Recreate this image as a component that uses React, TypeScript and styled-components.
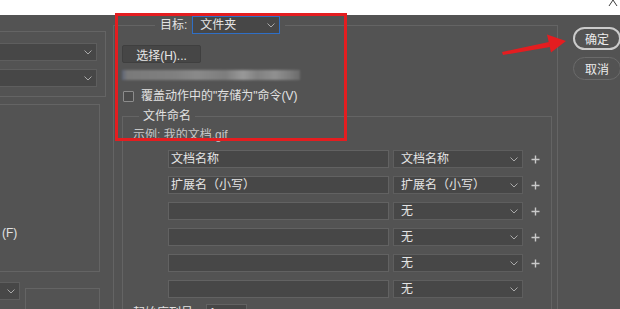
import React from "react";
import styled, { createGlobalStyle } from "styled-components";

const GlobalStyle = createGlobalStyle`
  * {
    box-sizing: border-box;
  }

  body {
    margin: 0;
    background: #535353;
  }
`;

const FONT = `"Liberation Sans", "Noto Sans CJK SC", sans-serif`;

const Page = styled.div`
  position: relative;
  width: 620px;
  height: 309px;
  overflow: hidden;

  display: flex;
  flex-direction: column;

  background: #535353;
  color: #e2e2e2;
  font-family: ${FONT};
  font-size: 12px;
  line-height: 14px;
`;

const TitleStrip = styled.div`
  height: 15px;
  flex-shrink: 0;

  display: flex;
  justify-content: flex-end;
  padding-right: 2px;

  background: #ffffff;
`;

const Body = styled.div`
  flex: 1;
  min-height: 0;

  display: flex;
  align-items: flex-start;
`;

/* left column, cut off by the window edge */

const LeftColumn = styled.div`
  width: 123px;
  margin-left: -10px;
  padding-top: 16px;
  flex-shrink: 0;

  display: flex;
  flex-direction: column;
`;

const SideBox = styled.div<{ $w: number; $h: number }>`
  width: ${(p) => p.$w}px;
  height: ${(p) => p.$h}px;
  border: 1px solid #646464;
`;

const PresetBox = styled(SideBox)`
  padding: 11px 8px 0 0;

  display: flex;
  flex-direction: column;
  gap: 8px;
`;

const OptionBox = styled(SideBox)`
  margin-top: 7px;
  padding: 0 0 31px 11px;

  display: flex;
  flex-direction: column;
  justify-content: flex-end;
`;

const BottomRow = styled.div`
  margin-top: 10px;

  display: flex;
  align-items: flex-start;
  gap: 5px;
`;

const LowerBox = styled(SideBox)`
  margin-top: 6px;
`;

/* dropdowns and fields */

const Dropdown = styled.div<{ $w?: number; $focused?: boolean }>`
  width: ${(p) => (p.$w ? `${p.$w}px` : "auto")};
  height: 18px;
  flex-shrink: 0;

  display: flex;
  align-items: center;
  justify-content: space-between;
  padding: 0 4px 0 7px;

  background: #474747;
  border: 1px solid ${(p) => (p.$focused ? "#2f6fc6" : "#5e5e5e")};
  color: #e4e4e4;
  white-space: nowrap;
`;

const TextField = styled.div<{ $w?: number }>`
  width: ${(p) => (p.$w ? `${p.$w}px` : "auto")};
  height: 18px;

  display: flex;
  align-items: center;
  padding-left: 2px;

  background: #474747;
  border: 1px solid #626262;
  color: #e4e4e4;
  white-space: nowrap;
`;

const Chevron = () => (
  <svg width="8" height="5" viewBox="0 0 8 5">
    <polyline points="0.5,0.5 4,4 7.5,0.5" fill="none" stroke="#a9a9a9" strokeWidth="1" />
  </svg>
);

const PlusIcon = () => (
  <svg width="9" height="9" viewBox="0 0 9 9">
    <path d="M4.5 0.5v8M0.5 4.5h8" stroke="#c9c9c9" strokeWidth="1.4" />
  </svg>
);

/* main settings group */

const Group = styled.fieldset`
  width: 445px;
  height: 310px;
  margin: 1px 0 0 0;
  padding: 11px 5px 0 8px;
  flex-shrink: 0;
  min-width: 0;

  border: 1px solid #646464;
`;

const TargetLegend = styled.legend`
  margin-left: 33px;
  padding: 0 5px;

  display: flex;
  align-items: center;
  gap: 5px;
`;

const PickButton = styled.button`
  width: 79px;
  height: 18px;
  padding: 0;

  display: block;

  background: #464646;
  border: 1px solid #3f3f3f;
  border-radius: 2px;
  color: #e6e6e6;
  font-family: ${FONT};
  font-size: 12px;
`;

const BlurredPath = styled.div`
  width: 178px;
  height: 10px;
  margin-top: 7px;

  background: linear-gradient(
    90deg,
    #5d6577 0%,
    #7a7a7a 3%,
    #808080 30%,
    #8a8a8a 42%,
    #7d7d7d 58%,
    #999999 68%,
    #818181 76%,
    #909090 86%,
    #7d7d7d 94%,
    #6b6b6b 100%
  );
  filter: blur(0.8px);
`;

const CheckRow = styled.label`
  margin-top: 9px;
  padding-left: 1px;

  display: flex;
  align-items: center;
  gap: 7px;
`;

const CheckBox = styled.span`
  width: 11px;
  height: 11px;

  background: #4b4b4b;
  border: 1px solid #8c8c8c;
  border-radius: 1px;
`;

const NamingGroup = styled.fieldset`
  height: 240px;
  margin: 6px 0 0 0;
  padding: 5px 0 0 10px;
  min-width: 0;

  border: 1px solid #646464;
`;

const NamingLegend = styled.legend`
  margin-left: 6px;
  padding: 0 4px;
`;

const Example = styled.div`
  color: #c6c6c6;
`;

const NameRows = styled.div`
  margin-top: 8px;
  padding-left: 35px;

  display: flex;
  flex-direction: column;
  gap: 8px;
`;

const NameRow = styled.div`
  display: grid;
  grid-template-columns: 221px 130px 16px;
  column-gap: 4px;
  align-items: center;
`;

const PlusCell = styled.span`
  display: flex;
  justify-content: center;
`;

const SerialRow = styled.div`
  margin-top: 6px;

  display: flex;
  align-items: center;
  gap: 10px;
`;

/* action buttons */

const Actions = styled.div`
  margin-left: 15px;
  padding-top: 12px;

  display: flex;
  flex-direction: column;
  gap: 7px;
`;

const PillButton = styled.button<{ $primary?: boolean }>`
  width: 48px;
  height: 23px;
  padding: 0;

  background: #535353;
  border: ${(p) => (p.$primary ? "2px solid #cbcbcb" : "1.5px solid #6b6b6b")};
  border-radius: 12px;
  color: #ececec;
  font-family: ${FONT};
  font-size: 12px;
`;

/* annotations drawn over the dialog */

const RedFrame = styled.div`
  position: absolute;
  left: 115px;
  top: 13px;
  width: 232px;
  height: 128px;

  border: 3px solid #e41d20;
  pointer-events: none;
`;

const ArrowMark = styled.svg`
  position: absolute;
  left: 500px;
  top: 32px;
`;

type NameEntry = { field: string; select: string; plus: boolean };

const nameEntries: NameEntry[] = [
  { field: "文档名称", select: "文档名称", plus: true },
  { field: "扩展名（小写）", select: "扩展名（小写）", plus: true },
  { field: "", select: "无", plus: true },
  { field: "", select: "无", plus: true },
  { field: "", select: "无", plus: true },
  { field: "", select: "无", plus: false },
];

const App: React.FC = () => {
  return (
    <Page>
      <GlobalStyle />

      <TitleStrip>
        <svg width="10" height="6" viewBox="0 0 10 6">
          <path d="M5 0L1 6M5 0L9 6" stroke="#3c3c3c" strokeWidth="1" fill="none" />
        </svg>
      </TitleStrip>

      <Body>
        <LeftColumn>
          <PresetBox $w={116} $h={66}>
            <Dropdown>
              <span />
              <Chevron />
            </Dropdown>
            <Dropdown>
              <span />
              <Chevron />
            </Dropdown>
          </PresetBox>

          <OptionBox $w={110} $h={168}>
            <span>(F)</span>
          </OptionBox>

          <BottomRow>
            <Dropdown $w={30}>
              <span />
              <Chevron />
            </Dropdown>
            <LowerBox $w={75} $h={40} />
          </BottomRow>
        </LeftColumn>

        <Group>
          <TargetLegend>
            <span>目标:</span>
            <Dropdown $w={88} $focused>
              <span>文件夹</span>
              <Chevron />
            </Dropdown>
          </TargetLegend>

          <PickButton>选择(H)...</PickButton>
          <BlurredPath />

          <CheckRow>
            <CheckBox />
            <span>覆盖动作中的"存储为"命令(V)</span>
          </CheckRow>

          <NamingGroup>
            <NamingLegend>文件命名</NamingLegend>
            <Example>示例: 我的文档.gif</Example>

            <NameRows>
              {nameEntries.map((entry, i) => (
                <NameRow key={i}>
                  <TextField>{entry.field}</TextField>
                  <Dropdown>
                    <span>{entry.select}</span>
                    <Chevron />
                  </Dropdown>
                  <PlusCell>{entry.plus && <PlusIcon />}</PlusCell>
                </NameRow>
              ))}
            </NameRows>

            <SerialRow>
              <span>起始序列号:</span>
              <TextField $w={41}>1</TextField>
            </SerialRow>
          </NamingGroup>
        </Group>

        <Actions>
          <PillButton $primary>确定</PillButton>
          <PillButton>取消</PillButton>
        </Actions>
      </Body>

      <RedFrame />

      <ArrowMark width="70" height="26" viewBox="0 0 70 26">
        <polygon points="2,20 49,10 50,15 3,23" fill="#e41d20" />
        <polygon points="66,9 47,2.5 51,20.5" fill="#e41d20" />
      </ArrowMark>
    </Page>
  );
};

export default App;
